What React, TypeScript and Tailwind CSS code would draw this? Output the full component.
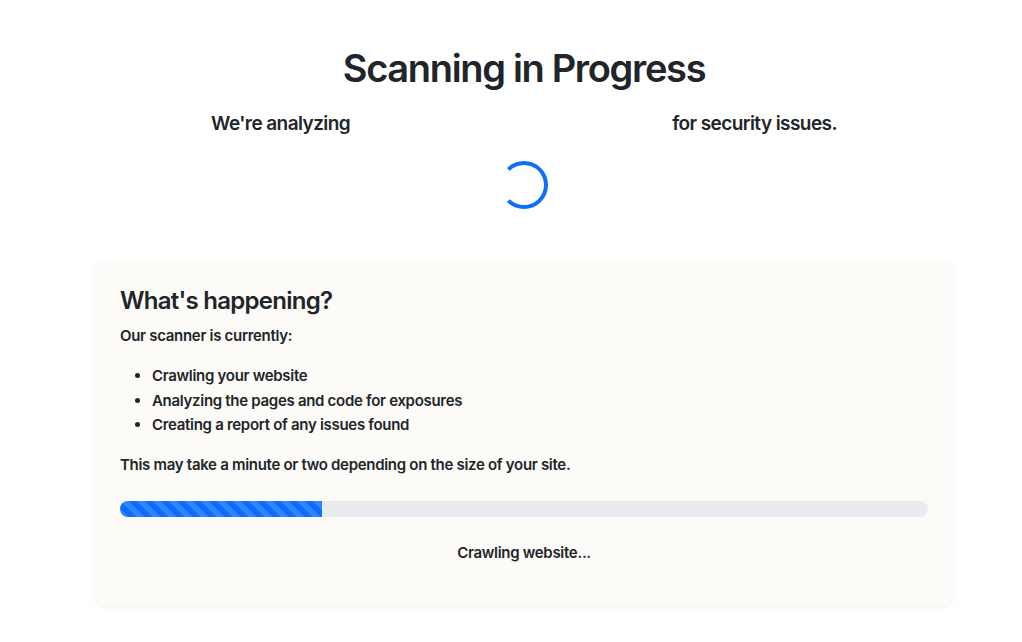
import React from "react";

export default function App() {
  const font = { fontFamily: "Inter, 'Noto Sans', sans-serif" };
  return (
    <div className="min-h-[642px] w-full bg-white text-[#212529]" style={font}>
      <div className="ml-[96px] mr-[70px] pt-[44px] flex flex-col items-center">
        <h1 className="text-[38px] leading-[48px] font-semibold tracking-[-0.035em]">Scanning in Progress</h1>
        <p className="mt-[18px] text-[19px] leading-[28px] font-semibold tracking-[-0.03em] flex">
          <span>We're analyzing</span>
          <span className="inline-block w-[322px]"></span>
          <span>for security issues.</span>
        </p>
        <div className="mt-[23px] w-[48px] h-[48px] rounded-full border-4 border-[#0d6efd] border-l-transparent"></div>
        <div className="mt-[53px] w-full rounded-[12px] bg-[#fcfbf7] shadow-[0_2px_8px_rgba(0,0,0,0.06)] px-[24px] pt-[24px] pb-[40px]">
          <h2 className="text-[24px] leading-[30px] font-semibold tracking-[-0.03em]">What's happening?</h2>
          <p className="mt-[8px] text-[15px] leading-[24px] font-semibold tracking-[-0.02em]">Our scanner is currently:</p>
          <ul className="mt-[16px] pl-[32px] list-disc text-[15px] leading-[24.5px] font-semibold tracking-[-0.02em]">
            <li>Crawling your website</li>
            <li>Analyzing the pages and code for exposures</li>
            <li>Creating a report of any issues found</li>
          </ul>
          <p className="mt-[15px] text-[15px] leading-[24px] font-semibold tracking-[-0.02em]">This may take a minute or two depending on the size of your site.</p>
          <div className="mt-[24px] h-[16px] w-full rounded-full bg-[#e9ecef] overflow-hidden flex">
            <div className="h-full w-[25%] bg-[#0d6efd] bg-[linear-gradient(45deg,rgba(255,255,255,.15)_25%,transparent_25%,transparent_50%,rgba(255,255,255,.15)_50%,rgba(255,255,255,.15)_75%,transparent_75%,transparent)] bg-[length:16px_16px]"></div>
          </div>
          <p className="mt-[24px] text-center text-[15px] leading-[24px] font-semibold tracking-[-0.02em]">Crawling website...</p>
        </div>
      </div>
    </div>
  );
}
